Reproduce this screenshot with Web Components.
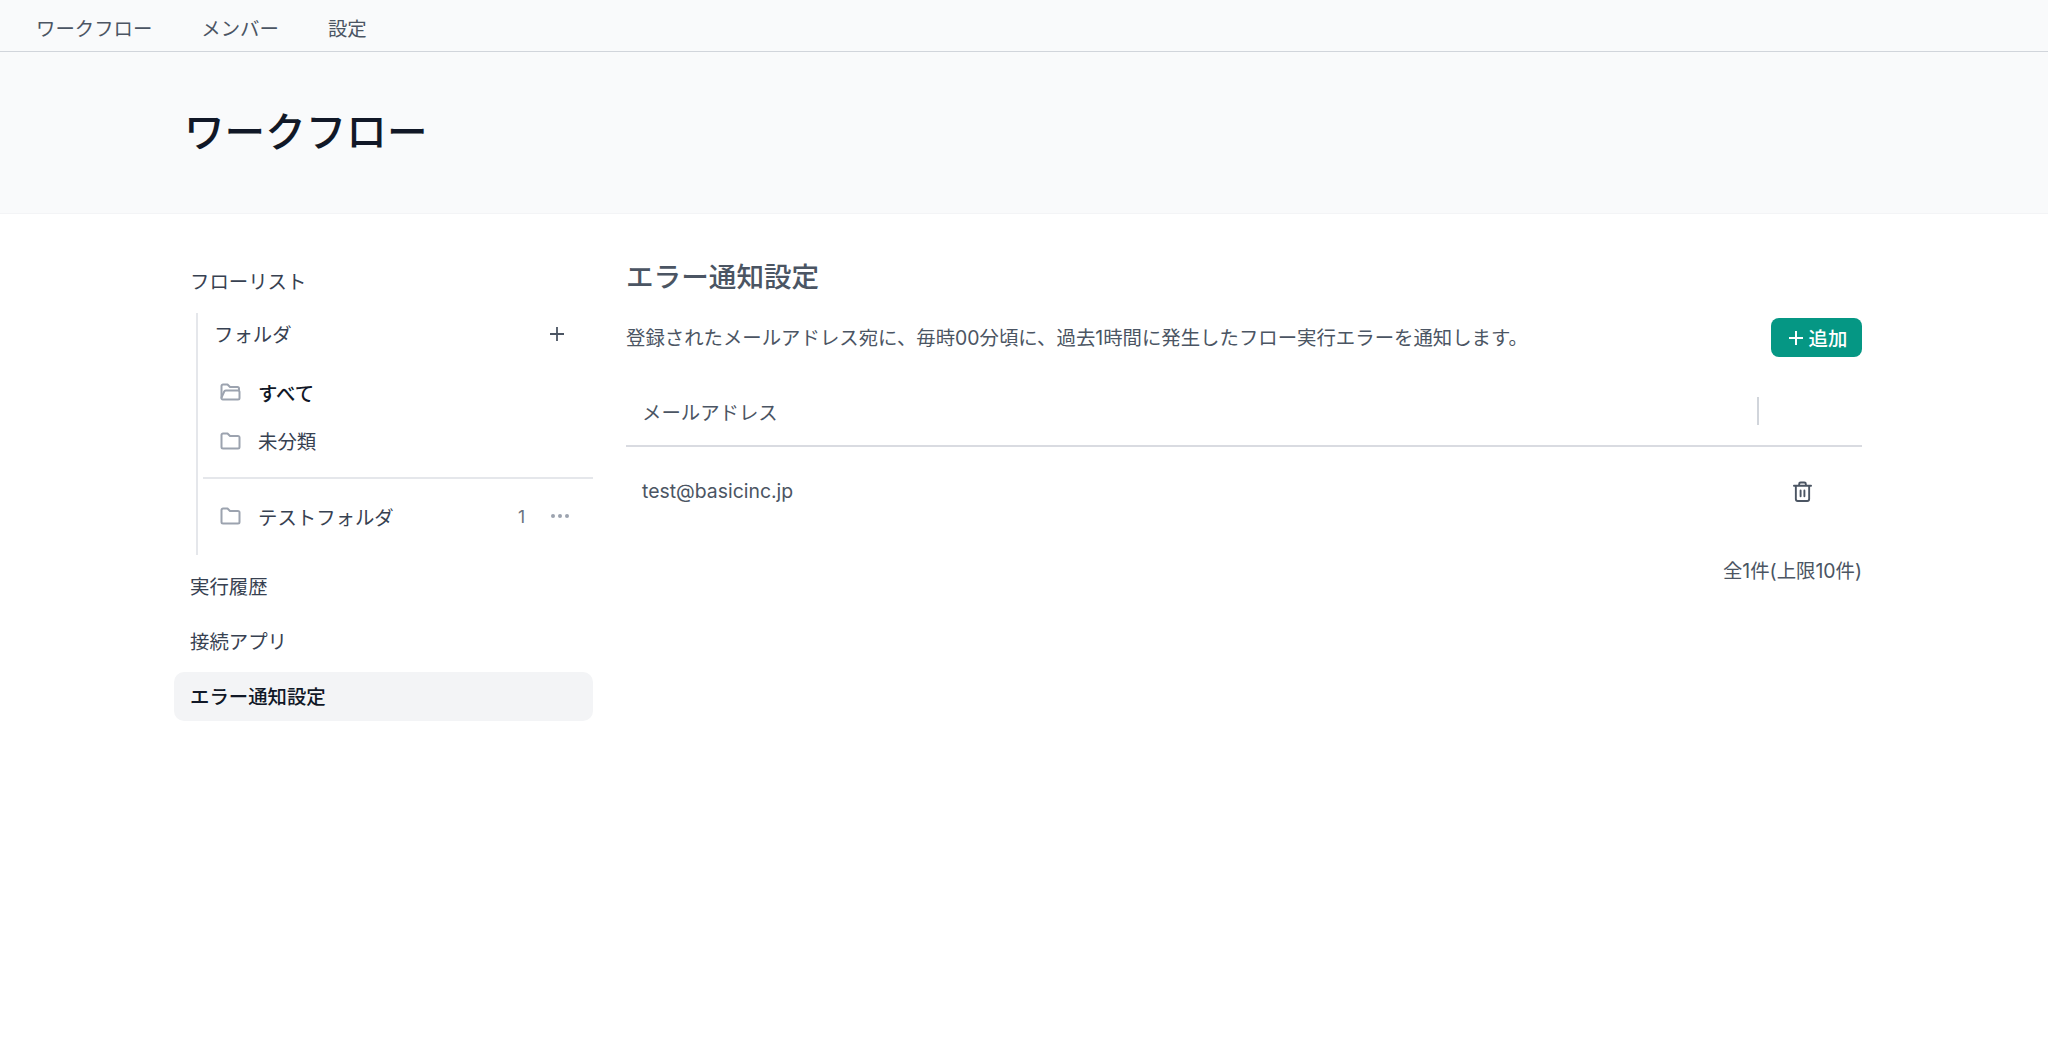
<!doctype html>
<html lang="ja"><head><meta charset="utf-8"><title>ワークフロー</title>
<style>
html,body{margin:0;padding:0;background:#fff}
body{font-family:Inter,"Noto Sans CJK JP","Noto Sans",sans-serif;font-size:19.4px;color:#374151}
</style></head><body>
<top-nav><a>ワークフロー</a><a>メンバー</a><a>設定</a></top-nav>
<page-header>ワークフロー</page-header>
<page-main>
  <side-nav>
    <nav-item>フローリスト</nav-item>
    <folder-panel>
      <folder-row icon="open" active>すべて</folder-row>
      <folder-row>未分類</folder-row>
      <folder-row slot="custom" count="1">テストフォルダ</folder-row>
    </folder-panel>
    <nav-item>実行履歴</nav-item>
    <nav-item>接続アプリ</nav-item>
    <nav-item active>エラー通知設定</nav-item>
  </side-nav>
  <error-settings></error-settings>
</page-main>
<script>
function def(name, html, extra){
  const t=document.createElement('template');t.innerHTML=html;
  customElements.define(name,class extends HTMLElement{
    constructor(){super();this.attachShadow({mode:'open'}).appendChild(t.content.cloneNode(true));}
    connectedCallback(){extra&&extra(this)}
  });
}
def('top-nav',`<style>
:host{display:flex;box-sizing:border-box;height:52px;background:#f9fafb;border-bottom:1px solid #d1d5db;padding-left:36px;gap:49px;align-items:center;font-size:19.4px;color:#4b5563}
::slotted(a){display:block;line-height:52px;margin-top:6px}
</style><slot></slot>`);
def('page-header',`<style>
:host{display:block;box-sizing:border-box;height:162px;background:#f9fafb;border-bottom:1px solid #f3f4f6;padding:53px 0 0 184px;font-size:40.6px;line-height:56px;font-weight:500;color:#111827}
</style><slot></slot>`);
def('page-main',`<style>
:host{display:flex;padding:43px 186px 0 174px;gap:33px;align-items:flex-start}
</style><slot></slot>`);
def('side-nav',`<style>
:host{display:flex;flex-direction:column;gap:6px;width:419px;flex:none}
</style><slot></slot>`);
def('nav-item',`<style>
:host{display:flex;align-items:center;box-sizing:border-box;height:49px;padding:0 0 2px 16px;border-radius:10px;color:#374151}
:host([active]){background:#f3f4f6;color:#111827;font-weight:500}
</style><slot></slot>`);
def('folder-panel',`<style>
:host{display:block;box-sizing:border-box;height:242px;margin:1px 0 1px 22px;border-left:2px solid #e5e7eb;padding-left:5px}
.head{display:flex;align-items:center;justify-content:space-between;height:41px;padding:0 29px 0 11px;margin-bottom:14px}
.head svg{display:block}
.sep{height:2px;background:#e5e7eb;margin:12px 0 13px}
</style>
<div class="head"><span>フォルダ</span><svg width="14" height="14" viewBox="0 0 14 14" fill="none" stroke="#4b5563" stroke-width="1.800"><path d="M7 0v14M0 7h14"/></svg></div>
<slot></slot><div class="sep"></div><slot name="custom"></slot>`);
def('folder-row',`<style>
:host{display:flex;align-items:center;height:48.5px;padding:0 24px 0 17px;gap:17px;color:#374151}
:host([active]){color:#111827;font-weight:500}
svg{flex:none;display:block}
.label{flex:1}
.n{color:#6b7280;font-size:17.500px;font-weight:400;width:9px}
.dots{display:flex;gap:3px;width:18px;margin-left:7px}
.dots i{width:4px;height:4px;border-radius:50%;background:#9ca3af}
</style><span id="ic" style="display:contents"></span><span class="label"><slot></slot></span><span id="extra" style="display:contents"></span>`,el=>{
  const r=el.shadowRoot;
  const open=el.getAttribute('icon')==='open';
  r.getElementById('ic').innerHTML=open
   ?`<svg width="21" height="18" viewBox="0 0 21 18" fill="none" stroke="#9ca3af" stroke-width="2" stroke-linejoin="round" stroke-linecap="round"><path d="M1.5 14.5V3A1.5 1.5 0 0 1 3 1.5h4.5l2.5 2.5h7.5A1.5 1.5 0 0 1 19 5.5V7"/><path d="M1.5 14.5A1.5 1.5 0 0 0 3 16.5h15a1.5 1.5 0 0 0 1.5-1.5V9a1.5 1.5 0 0 0-1.5-1.5H6a2 2 0 0 0-2 1.5l-2.5 5.5"/></svg>`
   :`<svg width="21" height="18" viewBox="0 0 21 18" fill="none" stroke="#9ca3af" stroke-width="2" stroke-linejoin="round"><path d="M1.5 3A1.5 1.5 0 0 1 3 1.5h4.5l2.5 2.5h7.5A1.5 1.5 0 0 1 19.500 5.500v9.500a1.500 1.500 0 0 1-1.500 1.500H3A1.500 1.500 0 0 1 1.500 15z"/></svg>`;
  if(el.hasAttribute('count')) r.getElementById('extra').innerHTML=`<span class="n">${el.getAttribute('count')}</span><span class="dots"><i></i><i></i><i></i></span>`;
});
def('error-settings',`<style>
:host{display:block;flex:1;min-width:0;color:#4b5563}
h2{margin:0;font-size:27.6px;line-height:40px;font-weight:500;height:40px;color:#4b5563}
.bar{display:flex;justify-content:space-between;align-items:center;margin-top:21px;height:39px}
.bar p{margin:-2px 0 0}
button{all:unset;box-sizing:border-box;display:flex;align-items:center;justify-content:center;gap:5px;width:91px;height:39px;border-radius:8px;background:#059784;color:#fff;font-weight:500;font-size:19.4px;padding-left:2px}
.thead,.row{display:flex;align-items:center;padding-left:16px}
.thead{height:90px;box-sizing:border-box;border-bottom:2px solid #d9dbe1;padding-top:20px;color:#4b5563}
.thead span,.row span{flex:1}
.thead i{display:block;width:2px;height:28px;background:#d1d5db;margin-right:103px}
.row{height:88px}
.row svg{display:block;margin-right:50px}
.foot{text-align:right;margin-top:16px;line-height:40px;height:40px}
</style>
<h2>エラー通知設定</h2>
<div class="bar"><p>登録されたメールアドレス宛に、毎時00分頃に、過去1時間に発生したフロー実行エラーを通知します。</p>
<button><svg width="16" height="16" viewBox="0 0 16 16" fill="none" stroke="#fff" stroke-width="2"><path d="M8 1v14M1 8h14"/></svg><span>追加</span></button></div>
<div class="thead"><span>メールアドレス</span><i></i></div>
<div class="row"><span>test@basicinc.jp</span><svg width="19" height="21" viewBox="0 0 20 22" fill="none" stroke="#4b5563" stroke-width="2" stroke-linejoin="round" stroke-linecap="round"><path d="M1 5h18M6.500 5V3a1.500 1.500 0 0 1 1.500-1.500h4A1.500 1.500 0 0 1 13.500 3v2M3 5v14a2 2 0 0 0 2 2h10a2 2 0 0 0 2-2V5M8 10v6M12 10v6"/></svg></div>
<div class="foot">全1件(上限10件)</div>`);
</script>
</body></html>
